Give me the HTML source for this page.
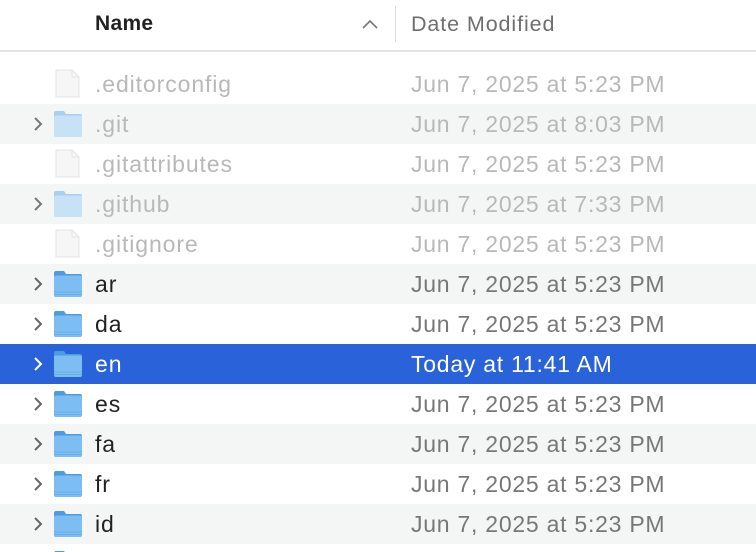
<!DOCTYPE html>
<html><head><meta charset="utf-8"><style>
*{margin:0;padding:0;box-sizing:border-box}
html,body{width:756px;height:552px;overflow:hidden}
body{background:#fff;font-family:"Liberation Sans",sans-serif;position:relative}
.hdr{position:absolute;left:0;top:0;width:756px;height:52px;border-bottom:2px solid #e3e3e3}
.hn{position:absolute;left:95px;top:12px;font-size:21px;font-weight:bold;color:#222;letter-spacing:0.3px}
.hd{position:absolute;left:411px;top:12px;font-size:21.5px;color:#6e6e6e;letter-spacing:0.9px}
.sep{position:absolute;left:395px;top:6px;width:1px;height:36px;background:#dcdcdc}
.row{position:absolute;left:0;width:756px;height:40px;overflow:hidden}
.g{background:#f4f5f5}
.sel{background:#2962d9}
.nm{position:absolute;left:95px;top:7px;font-size:23px;color:#222;letter-spacing:0.9px;white-space:nowrap}
.dt{position:absolute;left:411px;top:7px;font-size:23px;color:#777;letter-spacing:0.75px;white-space:nowrap}
.f .nm,.f .dt{color:#b8b8b8}
.sel .nm,.sel .dt{color:#fff}
.chev{position:absolute;left:32px;top:12px}
.ic{position:absolute;left:53px;top:6px}
</style></head><body>
<div class="hdr"><div class="hn">Name</div>
<svg style="position:absolute;left:361px;top:19px" width="18" height="12"><path d="M2 9 L9 2 L16 9" fill="none" stroke="#777" stroke-width="1.6"/></svg>
<div class="sep"></div><div class="hd">Date Modified</div></div>

<svg width="0" height="0" style="position:absolute"><defs>
<symbol id="fold" viewBox="0 0 30 28"><path d="M1 3 Q1 1 3 1 H11 L13 4 H27 Q29 4 29 6 V25 Q29 27 27 27 H3 Q1 27 1 25 Z" fill="#4a9be0"/><path d="M1 7 Q1 5.5 3 5.5 H27 Q29 5.5 29 7 V25 Q29 27 27 27 H3 Q1 27 1 25 Z" fill="#7dbdf2"/><path d="M1 22 H29" stroke="#68aee6" stroke-width="1"/><path d="M1 24.5 H29" stroke="#68aee6" stroke-width="1"/></symbol>
<symbol id="foldf" viewBox="0 0 30 28"><path d="M1 3 Q1 1 3 1 H11 L13 4 H27 Q29 4 29 6 V25 Q29 27 27 27 H3 Q1 27 1 25 Z" fill="#a9cfef"/><path d="M1 7 Q1 5.5 3 5.5 H27 Q29 5.5 29 7 V25 Q29 27 27 27 H3 Q1 27 1 25 Z" fill="#c7e1f7"/></symbol>
<symbol id="doc" viewBox="0 0 30 30"><path d="M3 1 H19 L26 8 V28 H3 Z" fill="#f6f6f6" stroke="#e4e4e4"/><path d="M19 1 V8 H26" fill="none" stroke="#e4e4e4"/></symbol>
<symbol id="ch" viewBox="0 0 12 16"><path d="M3 2 L9 8 L3 14" fill="none" stroke-width="2"/></symbol>
</defs></svg>

<div class="row f" style="top:64px"><svg class="ic" style="left:53px;top:5px" width="30" height="30"><use href="#doc"/></svg><div class="nm">.editorconfig</div><div class="dt">Jun 7, 2025 at 5:23 PM</div></div>
<div class="row f g" style="top:104px"><svg class="chev" width="12" height="16"><use href="#ch" stroke="#777"/></svg><svg class="ic" width="30" height="28"><use href="#foldf"/></svg><div class="nm">.git</div><div class="dt">Jun 7, 2025 at 8:03 PM</div></div>
<div class="row f" style="top:144px"><svg class="ic" style="left:53px;top:5px" width="30" height="30"><use href="#doc"/></svg><div class="nm">.gitattributes</div><div class="dt">Jun 7, 2025 at 5:23 PM</div></div>
<div class="row f g" style="top:184px"><svg class="chev" width="12" height="16"><use href="#ch" stroke="#777"/></svg><svg class="ic" width="30" height="28"><use href="#foldf"/></svg><div class="nm">.github</div><div class="dt">Jun 7, 2025 at 7:33 PM</div></div>
<div class="row f" style="top:224px"><svg class="ic" style="left:53px;top:5px" width="30" height="30"><use href="#doc"/></svg><div class="nm">.gitignore</div><div class="dt">Jun 7, 2025 at 5:23 PM</div></div>
<div class="row g" style="top:264px"><svg class="chev" width="12" height="16"><use href="#ch" stroke="#666"/></svg><svg class="ic" width="30" height="28"><use href="#fold"/></svg><div class="nm">ar</div><div class="dt">Jun 7, 2025 at 5:23 PM</div></div>
<div class="row" style="top:304px"><svg class="chev" width="12" height="16"><use href="#ch" stroke="#666"/></svg><svg class="ic" width="30" height="28"><use href="#fold"/></svg><div class="nm">da</div><div class="dt">Jun 7, 2025 at 5:23 PM</div></div>
<div class="row sel" style="top:344px"><svg class="chev" width="12" height="16"><use href="#ch" stroke="#fff"/></svg><svg class="ic" width="30" height="28"><use href="#fold"/></svg><div class="nm">en</div><div class="dt">Today at 11:41 AM</div></div>
<div class="row" style="top:384px"><svg class="chev" width="12" height="16"><use href="#ch" stroke="#666"/></svg><svg class="ic" width="30" height="28"><use href="#fold"/></svg><div class="nm">es</div><div class="dt">Jun 7, 2025 at 5:23 PM</div></div>
<div class="row g" style="top:424px"><svg class="chev" width="12" height="16"><use href="#ch" stroke="#666"/></svg><svg class="ic" width="30" height="28"><use href="#fold"/></svg><div class="nm">fa</div><div class="dt">Jun 7, 2025 at 5:23 PM</div></div>
<div class="row" style="top:464px"><svg class="chev" width="12" height="16"><use href="#ch" stroke="#666"/></svg><svg class="ic" width="30" height="28"><use href="#fold"/></svg><div class="nm">fr</div><div class="dt">Jun 7, 2025 at 5:23 PM</div></div>
<div class="row g" style="top:504px"><svg class="chev" width="12" height="16"><use href="#ch" stroke="#666"/></svg><svg class="ic" width="30" height="28"><use href="#fold"/></svg><div class="nm">id</div><div class="dt">Jun 7, 2025 at 5:23 PM</div></div>
<div class="row" style="top:544px;height:8px"><svg class="ic" style="top:6px" width="30" height="28"><use href="#fold"/></svg></div>
</body></html>
